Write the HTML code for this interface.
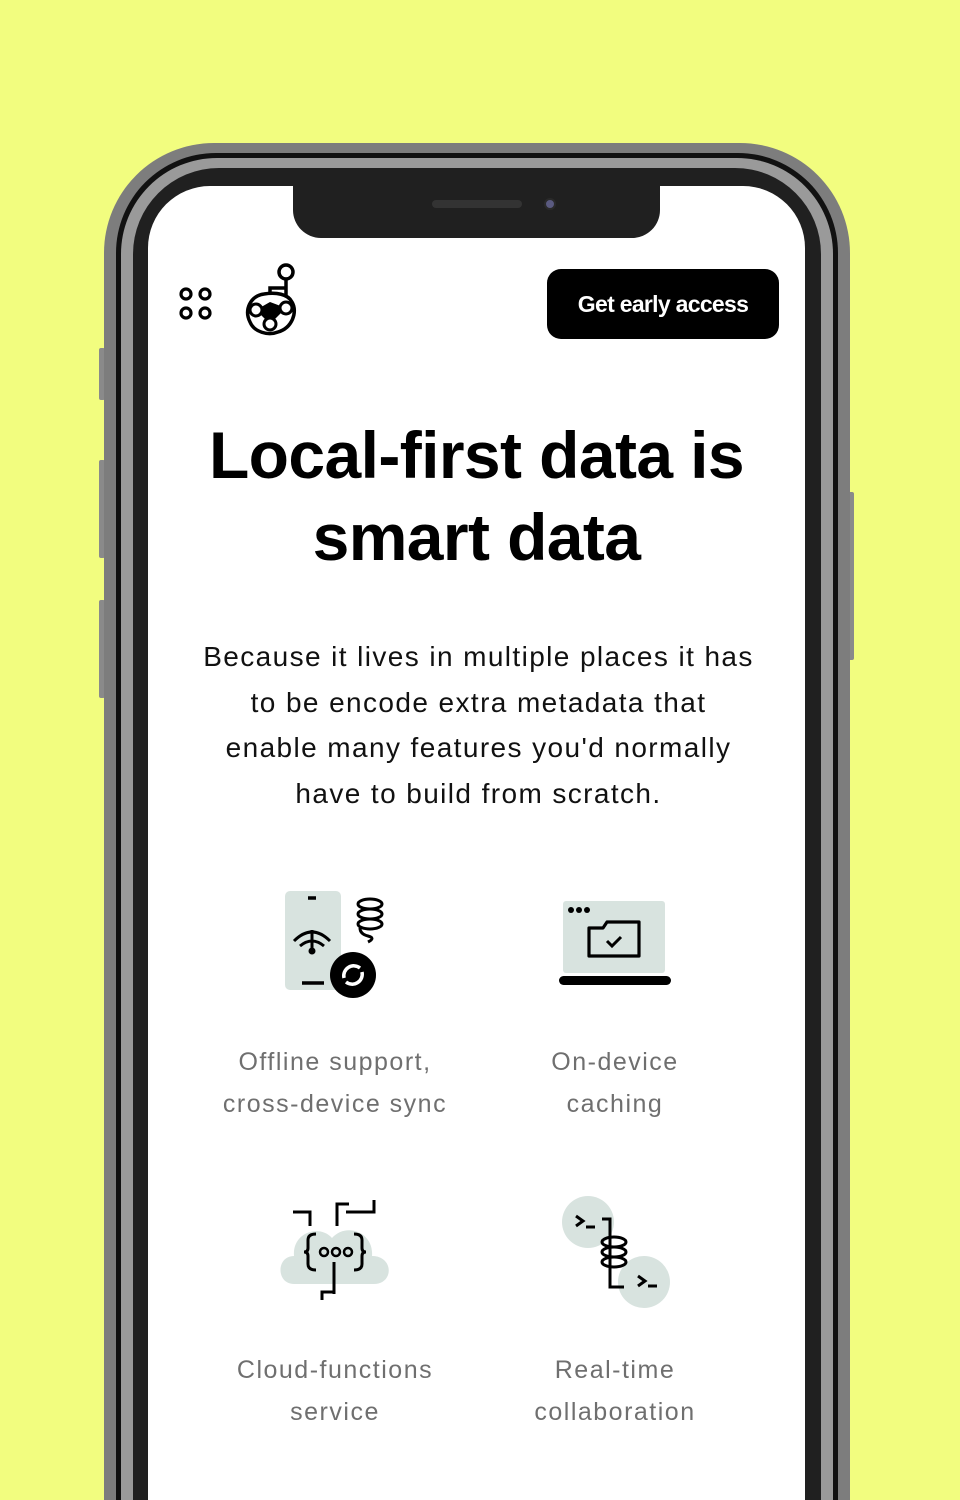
<!DOCTYPE html>
<html><head><meta charset="utf-8"><style>
*{margin:0;padding:0;box-sizing:border-box}
html,body{width:960px;height:1500px;overflow:hidden}
body{background:#f2fd7f;position:relative;font-family:"Liberation Sans",sans-serif}
.abs{position:absolute}
.btn{position:absolute;background:#8a8a8a;border-radius:2px}
.l1{left:104px;top:143px;width:746px;height:1357px;border-radius:110px 110px 0 0;background:#7d7d7d}
.l2{left:116px;top:153px;width:722px;height:1347px;border-radius:100px 100px 0 0;background:#111}
.l3{left:121px;top:158px;width:712px;height:1342px;border-radius:96px 96px 0 0;background:#9a9a9a}
.l4{left:133px;top:168px;width:688px;height:1332px;border-radius:86px 86px 0 0;background:#202020}
.scr{left:148px;top:186px;width:657px;height:1314px;border-radius:62px 62px 0 0;background:#fff}
.notch{left:293px;top:170px;width:367px;height:68px;background:#202020;border-radius:0 0 28px 28px}
h1{position:absolute;left:148px;width:657px;top:414px;text-align:center;font-size:66px;line-height:82px;font-weight:bold;letter-spacing:-0.6px;color:#000}
p.lead{position:absolute;left:100px;width:757px;top:634px;text-align:center;font-size:28px;line-height:45.5px;color:#111;letter-spacing:1.4px}
.cap{position:absolute;width:300px;text-align:center;font-size:25px;line-height:42px;color:#6f6f6f;letter-spacing:1.5px}
</style></head><body>
<div class="btn" style="left:99px;top:348px;width:6px;height:52px"></div>
<div class="btn" style="left:99px;top:460px;width:6px;height:98px"></div>
<div class="btn" style="left:99px;top:600px;width:6px;height:98px"></div>
<div class="btn" style="left:848px;top:492px;width:6px;height:168px"></div>
<div class="abs l1"></div><div class="abs l2"></div><div class="abs l3"></div><div class="abs l4"></div>
<div class="abs scr"></div>
<div class="abs notch"></div>
<div class="abs" style="left:432px;top:200px;width:90px;height:8px;border-radius:4px;background:#333"></div>
<div class="abs" style="left:544px;top:198px;width:12px;height:12px;border-radius:6px;background:#5a5a80;border:2px solid #2a2a2a"></div>

<svg class="abs" style="left:176px;top:284px" width="42" height="40" viewBox="0 0 42 40" fill="none" stroke="#000" stroke-width="3.2">
<circle cx="10" cy="10" r="5"/><circle cx="29" cy="10" r="5"/><circle cx="10" cy="29" r="5"/><circle cx="29" cy="29" r="5"/></svg>
<svg class="abs" style="left:242px;top:262px" width="60" height="76" viewBox="0 0 60 76">
<path d="M44 16 V36 M44 26 H28 V34" fill="none" stroke="#000" stroke-width="3.5"/>
<circle cx="44" cy="10" r="7" fill="#fff" stroke="#000" stroke-width="3.5"/>
<path d="M22 32 C8 34 2 48 8 60 C12 70 26 74 36 70 C50 66 56 50 50 40 C46 32 34 30 22 32Z" fill="#fff" stroke="#000" stroke-width="3.5"/>
<path d="M14 48 L28 40 L44 46 L28 62Z" fill="#000"/>
<circle cx="14" cy="48" r="6" fill="#fff" stroke="#000" stroke-width="3"/><circle cx="44" cy="46" r="6" fill="#fff" stroke="#000" stroke-width="3"/><circle cx="28" cy="62" r="6" fill="#fff" stroke="#000" stroke-width="3"/>
</svg>
<div class="abs" style="left:547px;top:269px;width:232px;height:70px;background:#000;border-radius:14px;color:#fff;font-size:23px;font-weight:bold;text-align:center;line-height:70px;letter-spacing:-0.7px">Get early access</div>

<h1>Local-first data is<br>smart data</h1>
<p class="lead">Because it lives in multiple places it has<br>to be encode extra metadata that<br>enable many features you'd normally<br>have to build from scratch.</p>

<svg class="abs" style="left:280px;top:886px" width="110" height="115" viewBox="0 0 110 115">
<rect x="5" y="5" width="56" height="99" rx="5" fill="#d8e3df"/>
<path d="M28 12h8M22 97h22" stroke="#000" stroke-width="3.5"/>
<path d="M14 55 q18-18 36 0 M20 60 q12-10 24 0" fill="none" stroke="#000" stroke-width="3"/>
<path d="M32 44v18" stroke="#000" stroke-width="3"/><circle cx="32" cy="65" r="3.5"/>
<ellipse cx="90" cy="18" rx="12" ry="5" fill="none" stroke="#000" stroke-width="3"/>
<ellipse cx="90" cy="28" rx="12" ry="5" fill="none" stroke="#000" stroke-width="3"/>
<ellipse cx="90" cy="38" rx="12" ry="5" fill="none" stroke="#000" stroke-width="3"/>
<path d="M80 42 q0 6 8 8 q8 2 0 6" fill="none" stroke="#000" stroke-width="3"/>
<circle cx="73" cy="89" r="23" fill="#000"/>
<path d="M64 92 a10 10 0 0 1 16 -10 M82 86 a10 10 0 0 1 -16 10" fill="none" stroke="#fff" stroke-width="3.5"/>
</svg>
<svg class="abs" style="left:555px;top:898px" width="120" height="92" viewBox="0 0 120 92">
<rect x="8" y="3" width="102" height="72" rx="3" fill="#d8e3df"/>
<circle cx="16" cy="12" r="3"/><circle cx="24" cy="12" r="3"/><circle cx="32" cy="12" r="3"/>
<path d="M34 30 h14 l4 -6 h32 v34 h-50 z" fill="none" stroke="#000" stroke-width="3.2" stroke-linejoin="round"/>
<path d="M52 43 l5 5 l9 -9" fill="none" stroke="#000" stroke-width="3"/>
<rect x="4" y="78" width="112" height="9" rx="4.5"/>
</svg>

<svg class="abs" style="left:276px;top:1198px" width="118" height="106" viewBox="0 0 118 106">
<path d="M18 86 C0 86 0 58 18 58 C16 34 44 26 56 40 C70 24 98 34 96 58 C118 58 118 86 98 86Z" fill="#d8e3df"/>
<path d="M17 14h17v14 M61 28V6h12 M70 14h28V2 M58 64v32 M46 102V94h12" fill="none" stroke="#000" stroke-width="3"/>
<path d="M40 36 q-8 0 -8 6 v8 q0 4 -4 4 q4 0 4 4 v8 q0 6 8 6 M78 36 q8 0 8 6 v8 q0 4 4 4 q-4 0 -4 4 v8 q0 6 -8 6" fill="none" stroke="#000" stroke-width="3"/>
<circle cx="48" cy="54" r="4" fill="none" stroke="#000" stroke-width="2.5"/><circle cx="60" cy="54" r="4" fill="none" stroke="#000" stroke-width="2.5"/><circle cx="72" cy="54" r="4" fill="none" stroke="#000" stroke-width="2.5"/>
</svg>
<svg class="abs" style="left:556px;top:1194px" width="120" height="116" viewBox="0 0 120 116">
<circle cx="32" cy="28" r="26" fill="#d8e3df"/><circle cx="88" cy="88" r="26" fill="#d8e3df"/>
<path d="M20 22l7 5l-7 5 M30 33h9 M82 82l7 5l-7 5 M92 92h9" fill="none" stroke="#000" stroke-width="3"/>
<path d="M46 25h8v68h14" fill="none" stroke="#000" stroke-width="3"/>
<ellipse cx="58" cy="48" rx="12" ry="5" fill="none" stroke="#000" stroke-width="3"/>
<ellipse cx="58" cy="58" rx="12" ry="5" fill="none" stroke="#000" stroke-width="3"/>
<ellipse cx="58" cy="68" rx="12" ry="5" fill="none" stroke="#000" stroke-width="3"/>
</svg>

<div class="cap" style="left:185px;top:1041px">Offline support,<br>cross-device sync</div>
<div class="cap" style="left:465px;top:1041px">On-device<br>caching</div>
<div class="cap" style="left:185px;top:1349px">Cloud-functions<br>service</div>
<div class="cap" style="left:465px;top:1349px">Real-time<br>collaboration</div>
</body></html>
